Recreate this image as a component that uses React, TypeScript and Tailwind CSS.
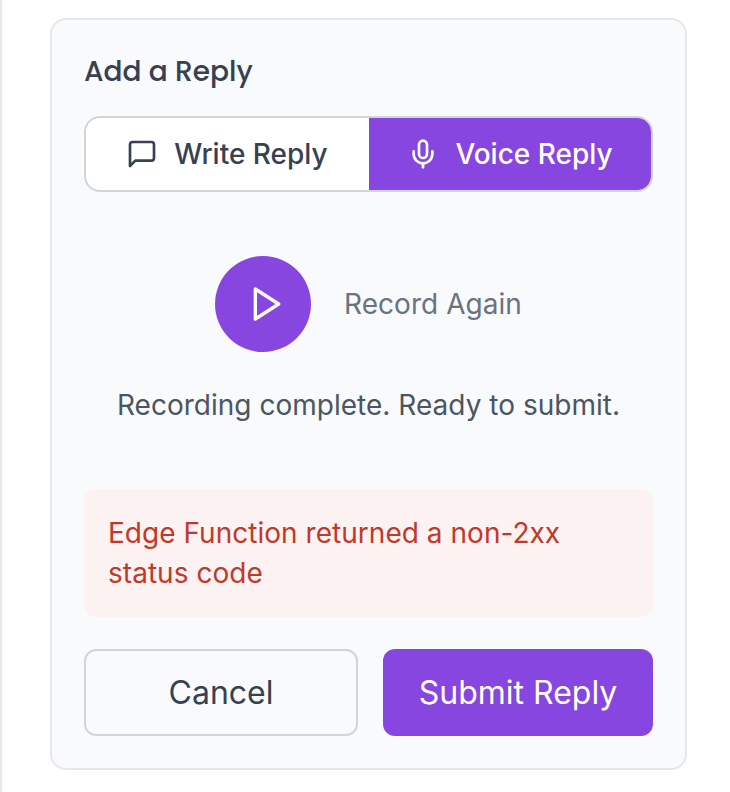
import React from "react";
import { Mic } from "lucide-react";

function MessageIcon() {
  return (
    <svg className="size-8" viewBox="0 0 24 24" fill="none" stroke="currentColor" strokeWidth="2" strokeLinecap="round" strokeLinejoin="round">
      <path d="M21 15a2 2 0 0 1-2 2H7l-4 4V5a2 2 0 0 1 2-2h14a2 2 0 0 1 2 2z" />
    </svg>
  );
}

function PlayIcon() {
  return (
    <svg className="ml-[7px] size-10" viewBox="0 0 24 24" fill="none" stroke="currentColor" strokeWidth="2" strokeLinecap="round" strokeLinejoin="round">
      <polygon points="5 3 19 12 5 21 5 3" />
    </svg>
  );
}

export default function App() {
  return (
    <main className="h-[792px] w-[730px] overflow-hidden border-l-2 border-[#e5e7eb] bg-white pt-[18px] pl-12 font-['Inter',sans-serif] text-[28px] leading-10 text-[#374151]">
      <section className="h-[752px] w-[637px] rounded-2xl border-2 border-[#e5e7eb] bg-[#f9fafc] p-8">
        <h2 className="mb-6 h-10 font-['Poppins','Lato',sans-serif] text-[28px] leading-10 font-medium">
          Add a Reply
        </h2>

        <div className="flex h-[76px] overflow-hidden rounded-2xl border-2 border-[#d1d5db] bg-white font-medium">
          <button className="flex w-[283px] items-center justify-center gap-4 pr-px">
            <MessageIcon />
            <span>Write Reply</span>
          </button>
          <button className="flex flex-1 items-center justify-center gap-4 bg-[#8746e0] text-white">
            <Mic size={32} strokeWidth={2} />
            <span>Voice Reply</span>
          </button>
        </div>

        <div className="flex h-[297px] flex-col items-center pt-16">
          <div className="flex items-center gap-[33px]">
            <button className="flex size-24 items-center justify-center rounded-full bg-[#8746e0] text-white">
              <PlayIcon />
            </button>
            <button className="tracking-[0.05px] text-[#6b7280]">Record Again</button>
          </div>
          <p className="mt-[33px] tracking-[0.02px] text-[#4b5563]">Recording complete. Ready to submit.</p>
        </div>

        <div className="mb-8 h-32 rounded-xl bg-[#fbf2f1] p-6 tracking-[0.03px] text-[#c0392b]">
          Edge Function returned a non-2xx status code
        </div>

        <div className="flex h-[87px] justify-between text-[32px]">
          <button className="w-[274px] rounded-xl border-2 border-[#d1d5db]">Cancel</button>
          <button className="w-[270px] rounded-xl bg-[#8746e0] text-white">Submit Reply</button>
        </div>
      </section>
    </main>
  );
}
